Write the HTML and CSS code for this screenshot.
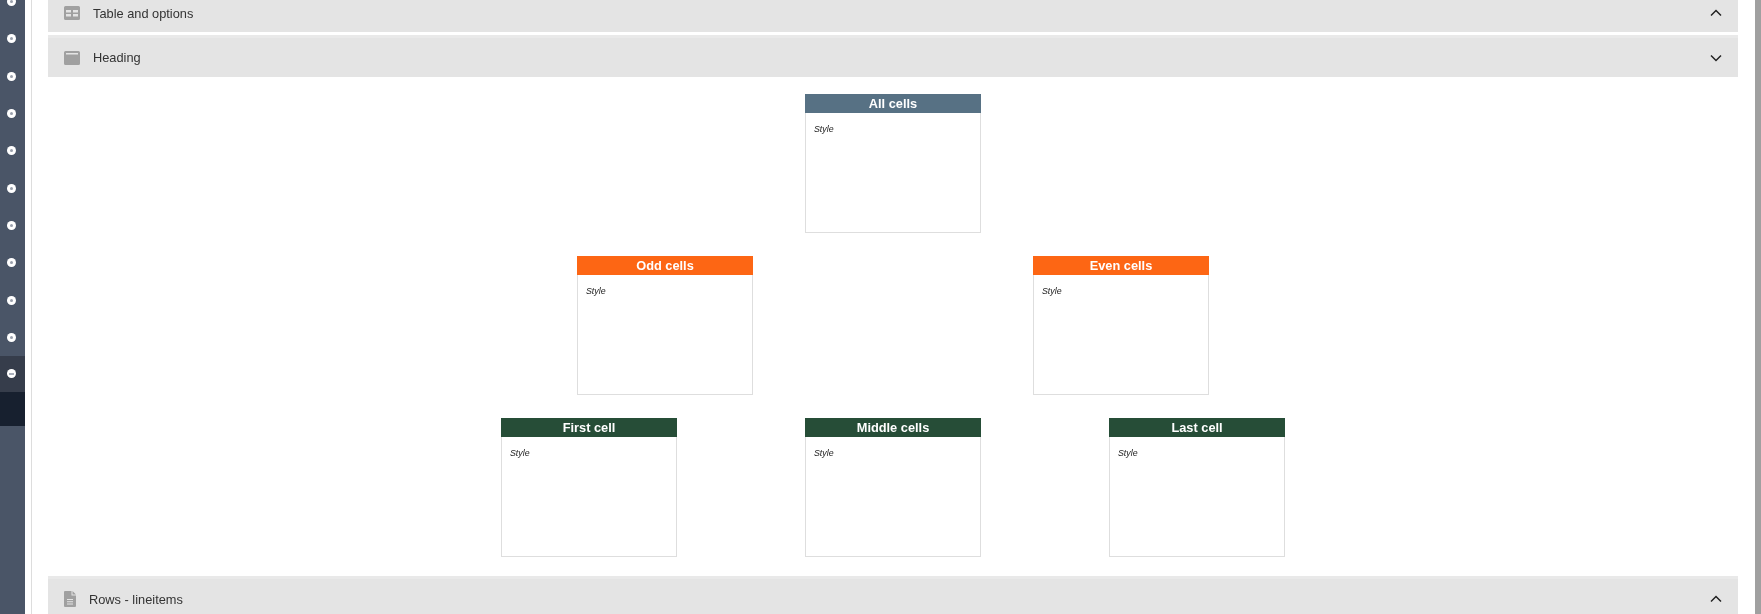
FILE: index.html
```html
<!DOCTYPE html>
<html lang="en">
<head>
<meta charset="utf-8">
<title>Table editor</title>
<link rel="stylesheet" href="styles.css">
</head>
<body>
<div class="app">
  <nav class="sidebar">
    <div class="nav-item first"><span class="dot"></span></div>
    <div class="nav-item"><span class="dot"></span></div>
    <div class="nav-item"><span class="dot"></span></div>
    <div class="nav-item"><span class="dot"></span></div>
    <div class="nav-item"><span class="dot"></span></div>
    <div class="nav-item"><span class="dot"></span></div>
    <div class="nav-item"><span class="dot"></span></div>
    <div class="nav-item"><span class="dot"></span></div>
    <div class="nav-item"><span class="dot"></span></div>
    <div class="nav-item"><span class="dot"></span></div>
    <div class="nav-item active"><span class="dot"></span></div>
    <div class="nav-item current"></div>
  </nav>
  <main class="content">
    <section class="bar bar-top">
      <svg class="icon" viewBox="0 0 16 14"><path fill="#a0a0a0" fill-rule="evenodd" d="M1.500 0h13A1.500 1.500 0 0 1 16 1.500v11a1.500 1.500 0 0 1-1.500 1.500h-13A1.500 1.500 0 0 1 0 12.500v-11A1.500 1.500 0 0 1 1.500 0zM2 4v2.500h5V4zm7 0v2.500h5V4zM2 8v2.500h5V8zm7 0v2.500h5V8z"/></svg>
      <span class="bar-label">Table and options</span>
      <svg class="chev" viewBox="0 0 12 8"><path d="M1 6.500l5-5 5 5" fill="none" stroke="#222" stroke-width="1.500"/></svg>
    </section>
    <section class="bar bar-heading">
      <svg class="icon" viewBox="0 0 16 14"><path fill="#a0a0a0" fill-rule="evenodd" d="M1.500 0h13A1.500 1.500 0 0 1 16 1.500v11a1.500 1.500 0 0 1-1.500 1.500h-13A1.500 1.500 0 0 1 0 12.500v-11A1.500 1.500 0 0 1 1.500 0zM2 2v1.500h12V2z"/></svg>
      <span class="bar-label">Heading</span>
      <svg class="chev" viewBox="0 0 12 8"><path d="M1 1.500l5 5 5-5" fill="none" stroke="#222" stroke-width="1.500"/></svg>
    </section>
    <div class="tree">
      <div class="tree-row">
        <div class="cell-card"><h3 class="card-title slate">All cells</h3><div class="card-body">Style</div></div>
      </div>
      <div class="tree-row wide">
        <div class="cell-card"><h3 class="card-title orange">Odd cells</h3><div class="card-body">Style</div></div>
        <div class="cell-card"><h3 class="card-title orange">Even cells</h3><div class="card-body">Style</div></div>
      </div>
      <div class="tree-row three">
        <div class="cell-card"><h3 class="card-title green">First cell</h3><div class="card-body">Style</div></div>
        <div class="cell-card"><h3 class="card-title green">Middle cells</h3><div class="card-body">Style</div></div>
        <div class="cell-card"><h3 class="card-title green">Last cell</h3><div class="card-body">Style</div></div>
      </div>
    </div>
    <section class="bar bar-rows">
      <svg class="icon-doc" viewBox="0 0 12 16"><path fill="#a0a0a0" fill-rule="evenodd" d="M1 0h6.500v4.500H12V15a1 1 0 0 1-1 1H1a1 1 0 0 1-1-1V1a1 1 0 0 1 1-1zm7.500 0L12 3.500H8.500zM3 8v1h6V8zm0 2.200v1h6v-1zm0 2.200v1h6v-1z"/></svg>
      <span class="bar-label">Rows - lineitems</span>
      <svg class="chev" viewBox="0 0 12 8"><path d="M1 6.500l5-5 5 5" fill="none" stroke="#222" stroke-width="1.500"/></svg>
    </section>
  </main>
  <div class="scrollbar"></div>
</div>
</body>
</html>
```
FILE: styles.css
```css
* { box-sizing: border-box; }
html, body { margin: 0; height: 614px; overflow: hidden; background: #fff; }
body { font-family: "Liberation Sans", Arial, sans-serif; }
.app { display: flex; height: 614px; }
.sidebar { width: 25px; flex: none; height: 614px; background: #4a5567; overflow: hidden; display: flex; flex-direction: column; }
.nav-item { height: 37.33px; flex: none; display: flex; align-items: center; justify-content: center; padding-right: 2px; }
.nav-item.first { height: 20.3px; align-items: flex-end; padding-bottom: 14.7px; }
.nav-item.active { background: #363d4b; height: 35.4px; }
.nav-item.current { background: #17202f; height: 34px; }
.dot { width: 9px; height: 9px; border-radius: 50%; background: #fff; position: relative; }
.dot::after { content: ""; position: absolute; left: 3px; top: 3px; width: 3px; height: 3px; border-radius: 50%; background: #9aa0ac; }
.active .dot::after { left: 2px; top: 3.5px; width: 5px; height: 2px; border-radius: 0; background: #aab0bb; }
.content { width: 1723px; flex: none; margin-left: 6px; border-left: 1px solid #ddd; padding: 0 16px; position: relative; will-change: transform; }
.bar { height: 42px; background: #e4e4e4; border-top: 3px solid #e9e9e9; padding: 1px 16px 0; display: flex; align-items: center; color: #333; font-size: 12.8px; }
.bar-top { height: 32px; border-top: 0; padding: 0 16px 6px; margin-bottom: 3px; }
.bar-heading .bar-label { margin-top: -2px; }
.bar-rows { margin-top: 19px; }
.icon { width: 16px; height: 14px; flex: none; margin-right: 13px; }
.icon-doc { width: 12px; height: 16px; flex: none; margin-right: 13px; }
.bar-label { flex: 1; }
.chev { width: 12px; height: 8px; flex: none; }
.tree { display: flex; flex-direction: column; align-items: center; padding-top: 17px; gap: 23px; }
.tree-row { display: flex; justify-content: center; }
.tree-row.wide { gap: 280px; }
.tree-row.three { gap: 128px; }
.cell-card { width: 176px; height: 139px; border: 1px solid #dedede; border-top: 0; display: flex; flex-direction: column; }
.card-title { margin: 0 -1px; height: 19px; line-height: 19px; font-size: 12.8px; font-weight: bold; text-align: center; color: #fff; }
.slate { background: #577184; }
.orange { background: #fd6614; }
.green { background: #264d37; }
.card-body { padding: 11px 8px; font-size: 8.8px; font-style: italic; color: #222; line-height: 11px; }
.scrollbar { position: absolute; right: 0; top: 0; width: 6px; height: 614px; background: #a0a0a0; }
```
